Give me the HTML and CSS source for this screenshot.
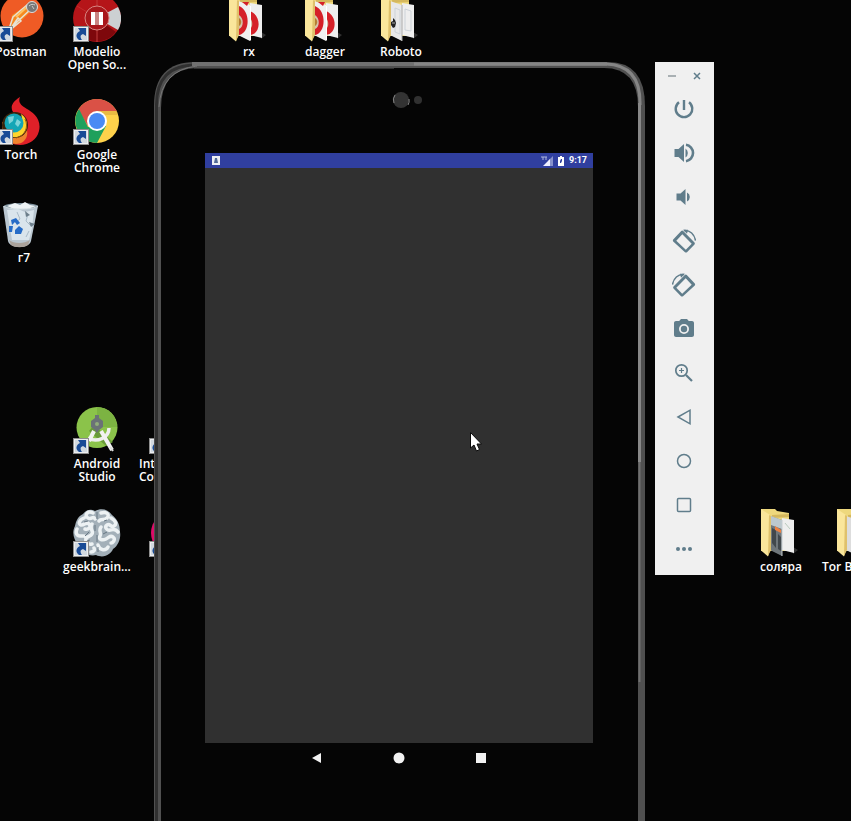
FILE: index.html
```html
<!DOCTYPE html>
<html lang="en">
<head>
<meta charset="utf-8">
<title>Desktop</title>
<link rel="stylesheet" href="styles.css">
</head>
<body>
<svg class="defs" aria-hidden="true">
  <defs>
    <symbol id="shortcut" viewBox="0 0 16 16">
      <path fill="#8e8e8e" d="M0 0h16v16H0z"/><path fill="#eceef0" d="M1 1h14v14H1z"/>
      <path fill="#d2d9e0" d="M2 2h12v12H2z"/>
      <path fill="#194b96" d="M5 2h8v8l-3-2c-3 1-3 3-1 6H6C2 11 3 7 7 5z"/>
    </symbol>
    <symbol id="folder" viewBox="0 0 48 48">
      <path fill="#303030" d="M36 38l5 3-5 4z"/>
      <path fill="#eed87d" d="M4 0h14l2 2 12 2v38H4z"/>
      <path fill="#d5b85d" d="M15 6l17-1v3l-17 1z"/>
      <path fill="#eeeeee" d="M25 9l12 2v33l-12-3z"/>
    </symbol>
    <symbol id="flap" viewBox="0 0 48 48">
      <path fill="#fae69b" d="M4 0l9 6v35l-2 6.500-7-6z"/>
      <path fill="#dfc16c" d="M12 6l2 1v34l-3 6z"/>
    </symbol>
    <symbol id="redfolder" viewBox="0 0 48 48">
      <use href="#folder"/>
      <path fill="#f0f0f0" d="M13 7l12 4v36l-12-6z"/>
      <path fill="#d52028" d="M17 8l7 0-2 4zM14 12c12 5 11 27 0 29zM25 17c12 5 11 23 0 24z"/>
      <path fill="#d5c2ac" d="M14 21c5 3 5 12 0 14zM25 24c3 3 3 9 0 11z"/>
      <path fill="#b67e32" d="M14 24c3 2 3 6 0 8z"/>
      <path fill="#fff" d="M25 12h1v35l-1-1z"/>
      <use href="#flap"/>
    </symbol>
  </defs>
</svg>
<main class="desktop">
  <div class="icons">
    <a class="icon c1 r1" href="#">
      <svg viewBox="0 0 48 48"><circle cx="25" cy="22" r="21.500" fill="#ef5b25"/>
        <path d="M12 38l3-17 17-11 4 5-15 15z" fill="#f58a20"/><path d="M11 38l5-15 14-12 4 4-14 13zM12 37l9-13 3 3z" fill="none" stroke="#e7e1d5" stroke-width="1.500"/>
        <path d="M19 23l13-12" stroke="#ffc163" stroke-width="2"/><circle cx="35" cy="13" r="5.500" fill="#777" stroke="#ddd"/><path d="M32 12c2-2 4-2 6-1M35 12l2 3" stroke="#ccc" fill="none"/>
        <use href="#shortcut" y="32" width="16" height="16"/></svg>
      <span>Postman</span></a>
    <a class="icon c2 r1" href="#">
      <svg viewBox="0 0 48 48"><circle cx="24" cy="24" r="24" fill="#b51519"/><path d="M24 24L5 38a24 24 0 0 0 38 0z" fill="#7e080c"/><path d="M24 24L45 13a24 24 0 0 1 0 23z" fill="#ccd0d2"/>
        <path d="M24 0v48" stroke="#c13c3c"/><path d="M24 24L4 12" stroke="#c12c2c"/><circle cx="24" cy="24" r="12" fill="#a9171b" stroke="#d88682"/><path d="M18 18h4v13h-4zm8 0h4v13h-4z" fill="#fff"/><path d="M22 18h4v13h-4z" fill="#c98482"/>
        <use href="#shortcut" y="32" width="16" height="16"/></svg>
      <span>Modelio Open So...</span></a>
    <a class="icon c4 r1" href="#"><svg viewBox="0 0 48 48"><use href="#redfolder"/></svg><span>rx</span></a>
    <a class="icon c5 r1" href="#"><svg viewBox="0 0 48 48"><use href="#redfolder"/></svg><span>dagger</span></a>
    <a class="icon c6 r1" href="#">
      <svg viewBox="0 0 48 48"><use href="#folder"/><path d="M13 7l12 4v36l-12-6z" fill="#e8e8e8"/><path d="M18 14l5 2v24l-5-2zM28 15l6 2v20l-6-1z" fill="none" stroke="#ccd2d8"/><path d="M25 11v36" stroke="#aaa"/><use href="#flap"/>
        <path d="M14 28l2-1v-3l2 2 1 3-1 4-2 1-2-3z" fill="#222"/><path d="M15 29h3" stroke="#aaa"/></svg>
      <span>Roboto</span></a>
    <a class="icon c1 r2" href="#">
      <svg viewBox="0 0 48 48"><path d="M23 0c-8 5-10 10-7 15 3 3 8 3 11 7 5 8 0 18-9 20l-5 4c13 5 26 0 29-12 3-13-7-19-12-22-7-4-9-7-7-12z" fill="#df2028"/>
        <path d="M5 25c0 13 3 21 14 22 10 0 15-11 8-20z" fill="#ef842e"/><circle cx="18" cy="28" r="13" fill="#3a240c"/><path d="M24 17c9 6 8 20-4 23-6 1-10-2-13-6 12 5 21-6 17-17z" fill="#ffd52d"/><path d="M28 22c4 8 0 17-9 19" stroke="#9b5a12" fill="none"/>
        <circle cx="17" cy="26" r="9.500" fill="#15a6b6"/><path d="M11 20l6-1-1 5-4 3zM20 22l4 3-3 5-3-3z" fill="#7cd3d9"/>
        <use href="#shortcut" y="32" width="16" height="16"/></svg>
      <span>Torch</span></a>
    <a class="icon c2 r2" href="#">
      <svg viewBox="0 0 48 48"><circle cx="24" cy="24" r="22" fill="#ffd24b"/><path d="M5 13a22 22 0 0 1 38 0l1 1H24L15 29z" fill="#da5146"/><path d="M6 12a22 22 0 0 0 18 34l9-17-18 1z" fill="#1fa05c"/>
        <path d="M24 14h20v4H30z" fill="#d6a43c" opacity=".5"/><circle cx="24" cy="24" r="10" fill="#fff"/><circle cx="24" cy="24" r="8" fill="#4a8af4"/>
        <use href="#shortcut" y="32" width="16" height="16"/></svg>
      <span>Google Chrome</span></a>
    <a class="icon c1 r3 bin" href="#">
      <svg viewBox="0 0 48 48"><path d="M6 6l5 35c2 8 21 8 23 0l7-35z" fill="#b9c6d0"/><path d="M10 10l11-1 7 3 9-2-2 18-3 12H15z" fill="#dae5ec"/><path d="M20 12l3 7-5 4m13-9l-2 7 5 5m-9 2l-4 6m11-3l-3 6" stroke="#a9bbc8" fill="none"/><path d="M32 22l6 2-4 3zM28 11l5 4-4 2z" fill="#6d7f8b"/>
        <path d="M12 40c5 4 15 4 21 0l-2 5c-4 3-13 3-17 0z" fill="#aaa29b"/><ellipse cx="24" cy="6" rx="17" ry="3" fill="#8194a0"/><path d="M10 6l8-3 5 2 5-3 5 3 6 1-8 3H17z" fill="#eef3f5"/><path d="M7 6c3 4 30 4 34 0" stroke="#d5e0e4" fill="none"/>
        <path d="M14 20l5-2 4 5-3 2-2-3-3 3zM12 26h4l-1 6h-3zM18 30l4-4 4 3-2 5h-6z" fill="#266cc7"/></svg>
      <span>г7</span></a>
    <a class="icon c2 r5" href="#">
      <svg viewBox="0 0 48 48"><circle cx="24" cy="21.500" r="20.500" fill="#8bc34a"/><path d="M24 1a20 20 0 0 1 20 20H24z" fill="#7cb342"/><path d="M16 25l5-6 19 17-7 4z" fill="#699b39"/>
        <path d="M15 32c9 5 21 0 21-10" fill="none" stroke="#eee" stroke-width="3.500"/><path d="M21 25l-5 10M28 25l11 19" stroke="#f2f2f2" stroke-width="4"/><path d="M37 41l3 4" stroke="#ddd" stroke-width="2"/>
        <path d="M22 9h4v3l4 3v6l-4 3-2 3-2-3-4-3v-6l4-3z" fill="#6b7276"/><circle cx="24" cy="18" r="2" fill="#91ad7a"/>
        <use href="#shortcut" y="32" width="16" height="16"/></svg>
      <span>Android Studio</span></a>
    <a class="icon cut c3 r5" href="#"><svg viewBox="0 0 48 48"><use href="#shortcut" y="32" width="16" height="16"/></svg><span>Inte<br>Co</span></a>
    <a class="icon c2 r6" href="#">
      <svg viewBox="0 0 48 48"><path d="M22 2c-5-3-10 0-12 3C4 8 3 13 2 17c-4 8 0 14 2 18 4 8 12 13 19 11 8 4 15-1 17-6 6-4 8-12 7-17 0-8-3-13-8-17C35 0 28-1 22 2z" fill="#a3b0b9"/>
        <path d="M20 4c-6-3-9 3-5 5s5-3 7 1M11 9c-5 2-6 6-3 7s5-4 8-1-1 6-4 5M4 20c-2 4 0 7 3 7s6-1 6 3M19 15c-3 5 2 7 0 10s-5 2-6 5 2 6 6 5M28 4c6-2 9 2 6 5s-6 0-8 3M38 9c5 3 6 6 3 8s-4-3-7-1 0 6 3 5 6-1 8 2M28 18c-3 4 1 6-1 9s2 5 6 3 4-4 7-2M25 36c2 6 8 6 10 2M38 34c2 0 4-3 3-5M18 43c3 0 4-2 3-4" fill="none" stroke="#edf2f4" stroke-width="3.500" stroke-linecap="round"/>
        <path d="M24 3v7m-2 6v6m2 4v7m1 5v5M15 12l-4 1m5 10l-4 4m19-15l3-1m-4 14l4-2m-17 8l-3 1" stroke="#687884" stroke-width="1"/>
        <use href="#shortcut" y="32" width="16" height="16"/></svg>
      <span>geekbrain...</span></a>
    <a class="icon c3 r6" href="#" aria-label="App"><svg viewBox="0 0 48 48"><circle cx="24" cy="24" r="22" fill="#dc0d68"/><use href="#shortcut" y="32" width="16" height="16"/></svg></a>
    <a class="icon c11 r6" href="#">
      <svg viewBox="0 0 48 48"><use href="#folder"/><path d="M13 7l12 4v36l-12-6z" fill="#70777b"/><path d="M14 7l11 4v9l-11-4z" fill="#bcc8cd"/><path d="M15 19l4 2v18l-4-5zM21 25l3 3v14l-3-2z" fill="#42484c"/><path d="M18 17l6 4v3l-6-3z" fill="#ef8040"/><path d="M28 14l5 6" stroke="#bac9bd"/><path d="M25 11v36" stroke="#c5ccd0"/><use href="#flap"/></svg>
      <span>соляра</span></a>
    <a class="icon c12 r6" href="#"><svg viewBox="0 0 48 48"><use href="#folder"/><path d="M13 7l12 4v36l-12-6z" fill="#ddd"/><use href="#flap"/></svg><span>Tor&nbsp;Browser</span></a>
  </div>

  <section class="phone" aria-label="Emulator">
    <svg class="frame" aria-hidden="true">
      <path d="M0 3000V44Q0 0 41 0H454Q491 0 491 44V3000z" fill="#505050"/>
      <path d="M2.500 3000V44Q2 3 42 3" stroke="#303030" stroke-width="3" fill="none"/>
      <path d="M38 2H453" stroke="#707070" stroke-width="4"/>
      <path d="M260 2H452Q487 3 486 43" stroke="#858585" stroke-width="3" fill="none"/>
      <path d="M485.500 41V400" stroke="#888" stroke-width="3"/>
      <path d="M485.500 400V620" stroke="#707070" stroke-width="2"/>
      <path d="M7 3000V46Q7 7 43 6H450Q484 6 484 45V3000z" fill="#050505"/>
      <path d="M40 6.500H240" stroke="#303030"/>
      <path d="M5 45Q7 8 43 4" stroke="#777" fill="none"/>
      <circle cx="247" cy="38" r="8" fill="#333"/><path d="M240 41a8 8 0 0 1 1-8M254 43a8 8 0 0 0 1-6" stroke="#858585" fill="none"/>
      <circle cx="264" cy="38" r="4" fill="#303030"/>
    </svg>
    <div class="screen">
      <header class="status">
        <svg width="8" height="9" viewBox="0 0 8 9"><path fill="#eef0f5" d="M0 0h8v9H0z"/><path fill="#526a97" d="M3 2h2l1 5H2z"/></svg>
        <svg class="signal" width="12" height="10" viewBox="0 0 12 10"><path fill="#8791cb" d="M12 0v10H7V5z"/><path fill="#eef" d="M9 3v7H2z"/><path d="M0 1h6M2 1v3M5 1v3" stroke="#aeb6dd"/></svg>
        <svg width="6" height="10" viewBox="0 0 6 10"><path fill="#fff" d="M2 0h2v1h2v9H0V1h2z"/><path fill="#303f9f" d="M3 3h1v2l-1 2H2V5z"/></svg>
        <time>9:17</time>
      </header>
    </div>
    <nav class="nav">
      <button aria-label="Back"><svg viewBox="0 0 12 12"><path d="M1 6l9-5v10z"/></svg></button>
      <button aria-label="Home"><svg viewBox="0 0 12 12"><circle cx="6" cy="6" r="5.500"/></svg></button>
      <button aria-label="Recents"><svg viewBox="0 0 12 12"><path d="M1 1h10v10H1z"/></svg></button>
    </nav>
  </section>

  <aside class="tools" aria-label="Emulator controls">
    <div class="winbar">
      <button aria-label="Minimize"><svg viewBox="0 0 10 10"><path d="M1 5h8" stroke="#a9b0b3" stroke-width="2"/></svg></button>
      <button aria-label="Close"><svg viewBox="0 0 10 10"><path d="M2 2l6 6M8 2L2 8" stroke="#607d8b" stroke-width="1.500"/></svg></button>
    </div>
    <button aria-label="Power"><svg viewBox="0 0 24 24"><path d="M12 3v10M7 5.200a8.300 8.300 0 1 0 10 0" fill="none" stroke="#607d8b" stroke-width="2.400"/></svg></button>
    <button aria-label="Volume up"><svg viewBox="0 0 24 24"><path d="M2.500 8h4L12 3v18l-5.500-5h-4zM13.500 7.500a5.500 5.500 0 0 1 0 9z"/><path d="M14 3.800a8.300 8.300 0 0 1 0 16.400" fill="none" stroke="#607d8b" stroke-width="2.600"/></svg></button>
    <button aria-label="Volume down"><svg viewBox="0 0 24 24"><path d="M4.500 8.500h4L13.500 4v16l-5-4.500h-4zM15 7.500a5 5 0 0 1 0 9z"/></svg></button>
    <button aria-label="Rotate left"><svg viewBox="0 0 24 24"><use href="#rotate"/></svg></button>
    <button aria-label="Rotate right"><svg viewBox="0 0 24 24"><g transform="matrix(-1 0 0 1 24 0)"><g id="rotate"><path fill-rule="evenodd" d="M9.200 2q1-.8 2 0l11.300 11.500q.8 1 0 2l-7.500 7.700q-1 .8-2 0L1.200 12.500q-.8-1 0-2zM10.300 5.300L4.300 11.700l9.500 9 5.900-5.900z"/><path d="M12 1.600c6-.6 10.500 3.600 11.500 10" fill="none" stroke="#607d8b" stroke-width="1.500"/><path d="M11 .8h5l-1 4z"/></g></g></svg></button>
    <button aria-label="Screenshot"><svg viewBox="0 0 24 24"><path fill-rule="evenodd" d="M9 2L7.200 4H4c-1.100 0-2 .9-2 2v12c0 1.100.9 2 2 2h16c1.100 0 2-.9 2-2V6c0-1.100-.9-2-2-2h-3.200L15 2zm3 15a5 5 0 1 1 0-10 5 5 0 0 1 0 10zm0-1.800a3.200 3.200 0 1 0 0-6.400 3.200 3.200 0 0 0 0 6.400z"/></svg></button>
    <button aria-label="Zoom"><svg viewBox="0 0 24 24"><circle cx="9.500" cy="9.500" r="5.700" fill="none" stroke="#607d8b" stroke-width="1.700"/><path d="M7 9.500h5M9.500 7v5" stroke="#607d8b" stroke-width="1.200"/><path d="M14 14l6 6" stroke="#607d8b" stroke-width="2.200"/></svg></button>
    <button aria-label="Back"><svg viewBox="0 0 24 24"><path d="M6 12l12-6.800v13.600z" class="line"/></svg></button>
    <button aria-label="Home"><svg viewBox="0 0 24 24"><circle cx="12" cy="12" r="6.500" class="line"/></svg></button>
    <button aria-label="Overview"><svg viewBox="0 0 24 24"><rect x="5.500" y="5.500" width="13" height="13" rx="1" class="line"/></svg></button>
    <button aria-label="More"><svg viewBox="0 0 24 24"><circle cx="6" cy="12" r="2"/><circle cx="12" cy="12" r="2"/><circle cx="18" cy="12" r="2"/></svg></button>
  </aside>

  <svg class="cursor" viewBox="0 0 12 20" aria-hidden="true"><path d="M.5.500v15.500l3.500-3 2.500 6 3-1.500L7 12h4.500z" fill="#fff" stroke="#0a0a0a"/></svg>
</main>
</body>
</html>
```
FILE: styles.css
```css
* { box-sizing: border-box; }

body {
  margin: 0;
  background: #050505;
  font-family: "Open Sans", "Noto Sans", sans-serif;
}

button {
  display: flex;
  align-items: center;
  justify-content: center;
  padding: 0;
  border: 0;
  background: none;
}

.defs { position: absolute; width: 0; height: 0; }

.desktop {
  position: relative;
  height: 100vh;
  overflow: hidden;
}

/* Desktop shortcuts sit on a repeating 76 x 103 grid */
.icons {
  display: grid;
  grid-template-columns: repeat(12, 76px);
  grid-auto-rows: 103px;
  margin: -6px 0 0 -17px;
}

.icon {
  display: flex;
  flex-direction: column;
  align-items: center;
  gap: 3px;
  color: #fff;
  font-size: 12px;
  font-weight: 600;
  line-height: 13px;
  text-align: center;
  text-decoration: none;
}
.icon svg { width: 48px; height: 48px; flex: none; }
.icon span { max-width: 70px; }
.bin span { padding-left: 6px; }
.cut span {
  align-self: flex-start;
  width: 19px;
  padding-left: 4px;
  overflow: hidden;
  text-align: left;
}

.c1 { grid-column: 1; }
.c2 { grid-column: 2; }
.c3 { grid-column: 3; }
.c4 { grid-column: 4; }
.c5 { grid-column: 5; }
.c6 { grid-column: 6; }
.c11 { grid-column: 11; }
.c12 { grid-column: 12; }
.r1 { grid-row: 1; }
.r2 { grid-row: 2; }
.r3 { grid-row: 3; }
.r5 { grid-row: 5; }
.r6 { grid-row: 6; }

/* Emulator window */
.phone {
  position: absolute;
  top: 62px;
  left: 154px;
  bottom: 0;
  width: 491px;
  padding: 91px 52px 48px 51px;
  display: flex;
  flex-direction: column;
}
.frame {
  position: absolute;
  inset: 0;
  width: 100%;
  height: 100%;
}
.screen {
  position: relative;
  flex: 1;
  background: #303030;
}
.status {
  display: flex;
  align-items: center;
  gap: 5px;
  height: 15px;
  padding: 0 6px 0 7px;
  background: #303f9f;
  color: #fff;
  font: 700 9px/15px Roboto, sans-serif;
}
.signal { margin-left: auto; }

.nav {
  position: relative;
  display: flex;
  justify-content: center;
  height: 30px;
}
.nav button { width: 82px; }
.nav svg { width: 12px; height: 12px; fill: #f2f2f2; }

.tools {
  position: absolute;
  top: 62px;
  left: 655px;
  width: 59px;
  padding-bottom: 4px;
  background: #f0f0f0;
}
.tools > button { width: 100%; height: 44px; padding-right: 2px; }
.tools > button svg { width: 24px; height: 24px; fill: #607d8b; }
.tools .line { fill: none; stroke: #607d8b; stroke-width: 1.5; }
.winbar {
  display: flex;
  justify-content: center;
  gap: 15px;
  height: 25px;
  padding-top: 3px;
}
.winbar svg { width: 10px; height: 10px; }

.cursor {
  position: absolute;
  top: 432px;
  left: 470px;
  width: 12px;
  height: 20px;
}
```
